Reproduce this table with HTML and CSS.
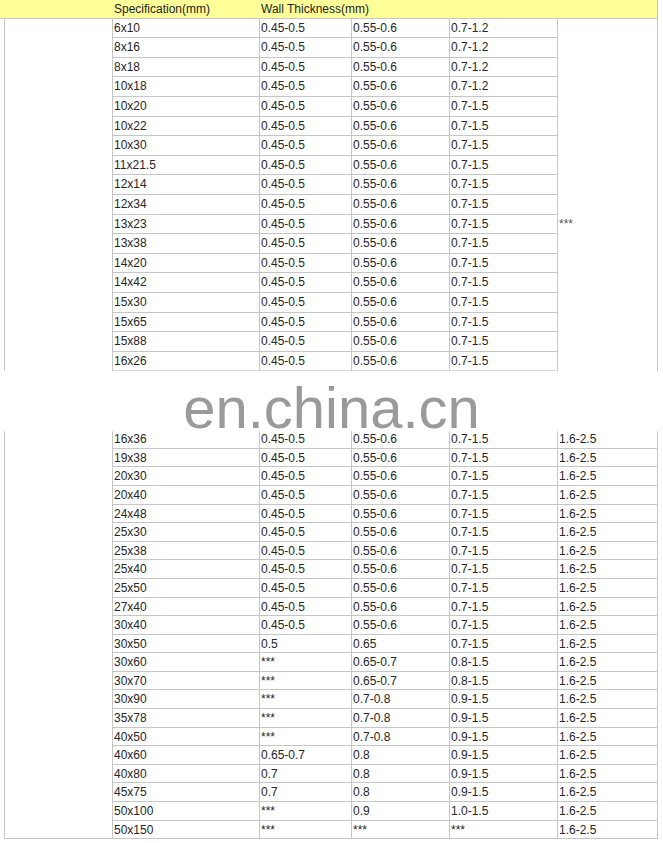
FILE: index.html
```html
<!DOCTYPE html>
<html>
<head>
<meta charset="utf-8">
<link rel="stylesheet" href="styles.css">
</head>
<body>
<div class="page">
  <div class="spec">
    <div class="head h0"></div>
    <div class="head h1">Specification(mm)</div>
    <div class="head h2">Wall Thickness(mm)</div>
    <div class="blank"></div>
    <div class="merged">***</div>

    <div>6x10</div><div>0.45-0.5</div><div>0.55-0.6</div><div>0.7-1.2</div>
    <div>8x16</div><div>0.45-0.5</div><div>0.55-0.6</div><div>0.7-1.2</div>
    <div>8x18</div><div>0.45-0.5</div><div>0.55-0.6</div><div>0.7-1.2</div>
    <div>10x18</div><div>0.45-0.5</div><div>0.55-0.6</div><div>0.7-1.2</div>
    <div>10x20</div><div>0.45-0.5</div><div>0.55-0.6</div><div>0.7-1.5</div>
    <div>10x22</div><div>0.45-0.5</div><div>0.55-0.6</div><div>0.7-1.5</div>
    <div>10x30</div><div>0.45-0.5</div><div>0.55-0.6</div><div>0.7-1.5</div>
    <div>11x21.5</div><div>0.45-0.5</div><div>0.55-0.6</div><div>0.7-1.5</div>
    <div>12x14</div><div>0.45-0.5</div><div>0.55-0.6</div><div>0.7-1.5</div>
    <div>12x34</div><div>0.45-0.5</div><div>0.55-0.6</div><div>0.7-1.5</div>
    <div>13x23</div><div>0.45-0.5</div><div>0.55-0.6</div><div>0.7-1.5</div>
    <div>13x38</div><div>0.45-0.5</div><div>0.55-0.6</div><div>0.7-1.5</div>
    <div>14x20</div><div>0.45-0.5</div><div>0.55-0.6</div><div>0.7-1.5</div>
    <div>14x42</div><div>0.45-0.5</div><div>0.55-0.6</div><div>0.7-1.5</div>
    <div>15x30</div><div>0.45-0.5</div><div>0.55-0.6</div><div>0.7-1.5</div>
    <div>15x65</div><div>0.45-0.5</div><div>0.55-0.6</div><div>0.7-1.5</div>
    <div>15x88</div><div>0.45-0.5</div><div>0.55-0.6</div><div>0.7-1.5</div>
    <div>16x26</div><div>0.45-0.5</div><div>0.55-0.6</div><div>0.7-1.5</div>
    <div></div><div></div><div></div><div></div>
    <div></div><div></div><div></div><div></div>
    <div></div><div></div><div></div><div></div>

    <div>16x36</div><div>0.45-0.5</div><div>0.55-0.6</div><div>0.7-1.5</div><div>1.6-2.5</div>
    <div>19x38</div><div>0.45-0.5</div><div>0.55-0.6</div><div>0.7-1.5</div><div>1.6-2.5</div>
    <div>20x30</div><div>0.45-0.5</div><div>0.55-0.6</div><div>0.7-1.5</div><div>1.6-2.5</div>
    <div>20x40</div><div>0.45-0.5</div><div>0.55-0.6</div><div>0.7-1.5</div><div>1.6-2.5</div>
    <div>24x48</div><div>0.45-0.5</div><div>0.55-0.6</div><div>0.7-1.5</div><div>1.6-2.5</div>
    <div>25x30</div><div>0.45-0.5</div><div>0.55-0.6</div><div>0.7-1.5</div><div>1.6-2.5</div>
    <div>25x38</div><div>0.45-0.5</div><div>0.55-0.6</div><div>0.7-1.5</div><div>1.6-2.5</div>
    <div>25x40</div><div>0.45-0.5</div><div>0.55-0.6</div><div>0.7-1.5</div><div>1.6-2.5</div>
    <div>25x50</div><div>0.45-0.5</div><div>0.55-0.6</div><div>0.7-1.5</div><div>1.6-2.5</div>
    <div>27x40</div><div>0.45-0.5</div><div>0.55-0.6</div><div>0.7-1.5</div><div>1.6-2.5</div>
    <div>30x40</div><div>0.45-0.5</div><div>0.55-0.6</div><div>0.7-1.5</div><div>1.6-2.5</div>
    <div>30x50</div><div>0.5</div><div>0.65</div><div>0.7-1.5</div><div>1.6-2.5</div>
    <div>30x60</div><div>***</div><div>0.65-0.7</div><div>0.8-1.5</div><div>1.6-2.5</div>
    <div>30x70</div><div>***</div><div>0.65-0.7</div><div>0.8-1.5</div><div>1.6-2.5</div>
    <div>30x90</div><div>***</div><div>0.7-0.8</div><div>0.9-1.5</div><div>1.6-2.5</div>
    <div>35x78</div><div>***</div><div>0.7-0.8</div><div>0.9-1.5</div><div>1.6-2.5</div>
    <div>40x50</div><div>***</div><div>0.7-0.8</div><div>0.9-1.5</div><div>1.6-2.5</div>
    <div>40x60</div><div>0.65-0.7</div><div>0.8</div><div>0.9-1.5</div><div>1.6-2.5</div>
    <div>40x80</div><div>0.7</div><div>0.8</div><div>0.9-1.5</div><div>1.6-2.5</div>
    <div>45x75</div><div>0.7</div><div>0.8</div><div>0.9-1.5</div><div>1.6-2.5</div>
    <div>50x100</div><div>***</div><div>0.9</div><div>1.0-1.5</div><div>1.6-2.5</div>
    <div>50x150</div><div>***</div><div>***</div><div>***</div><div>1.6-2.5</div>
  </div>
  <div class="watermark">en.china.cn</div>
</div>
</body>
</html>
```

FILE: styles.css
```css
html, body {
  margin: 0;
  padding: 0;
  background: #ffffff;
}

body {
  font-family: "Liberation Sans", Arial, sans-serif;
  font-size: 12px;
  color: #262626;
}

.page {
  position: relative;
  width: 663px;
  height: 843px;
  overflow: hidden;
}

.spec {
  display: grid;
  grid-template-columns: 5px 108px 147px 92px 98px 108px 100px;
  grid-template-rows: 18.7px repeat(21, 19.6px) repeat(22, 18.6px);
}

.spec > div {
  box-sizing: border-box;
  border-right: 1px solid #c6c6c6;
  border-bottom: 1px solid #c6c6c6;
  padding: 2px 0 0 1px;
  line-height: 14px;
  white-space: nowrap;
  overflow: hidden;
}

.spec > .head {
  background: #ffff99;
  color: #222222;
}

.spec > .h0 {
  grid-column: 1 / 3;
  grid-row: 1;
  border-right: none;
}

.spec > .h1 {
  grid-column: 3;
  grid-row: 1;
  border-right: none;
}

.spec > .h2 {
  grid-column: 4 / 8;
  grid-row: 1;
}

.spec > .blank {
  grid-column: 1 / 3;
  grid-row: 2 / 46;
  margin-left: 4px;
  border-left: 1px solid #c6c6c6;
}

.spec > .merged {
  grid-column: 7;
  grid-row: 2 / 23;
  display: flex;
  align-items: center;
  padding-top: 0;
  color: #555555;
}

.watermark {
  position: absolute;
  left: 0;
  right: 0;
  top: 372px;
  height: 58px;
  box-sizing: border-box;
  padding-top: 16px;
  background: #ffffff;
  box-shadow: 0 0 2px 1px #ffffff;
  font-family: "Liberation Sans", Arial, sans-serif;
  font-size: 58px;
  line-height: 40px;
  color: #9a9a9a;
  text-align: center;
}
```
